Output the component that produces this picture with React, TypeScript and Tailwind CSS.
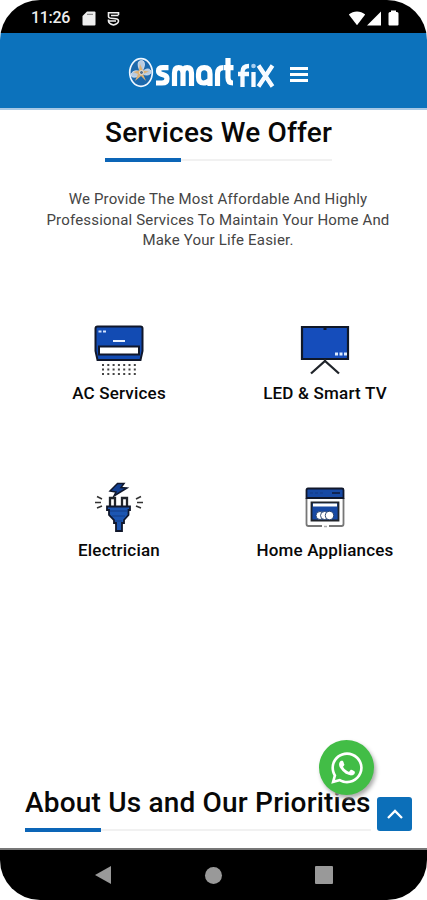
import React from 'react';
import { FaWhatsapp } from 'react-icons/fa';

function StatusBar() {
  return (
    <div className="flex h-[33px] shrink-0 items-center bg-black pl-[31px] pr-[28px] pt-[3px] text-[#eee]">
      <span className="w-[39px] whitespace-nowrap text-[16px] font-medium leading-5 tracking-[-0.3px]">11:26</span>
      <svg className="ml-[12px]" width="14" height="15" viewBox="0 0 14 15" fill="currentColor">
        <path d="M5 .5h7.5q1 0 1 1v12q0 1-1 1h-11q-1 0-1-1V5z" />
        <path d="M5 3.3h6" stroke="#777" strokeWidth="1" />
      </svg>
      <svg className="ml-[11px]" width="13" height="15" viewBox="0 0 13 15" fill="none" stroke="currentColor" strokeWidth="1.6">
        <path d="M11.500 4V1.800h-10v3.700q0 2 5 2t5 2.500c0 2-2 3.200-5 4-3-.8-5-2-5-4V8.500M4 4.500h7.500M1.500 10H9" />
      </svg>
      <div className="ml-auto flex items-center">
        <svg width="18" height="15" viewBox="0 0 18 15" fill="#fff"><path d="M.8 3.6C5.5-.5 12.500-.5 17.200 3.600L9 14.300z" /></svg>
        <svg className="ml-[1px]" width="14" height="15" viewBox="0 0 14 15" fill="#fff"><path d="M14 .5V14.500H0z" /></svg>
        <svg className="ml-[7px]" width="11" height="16" viewBox="0 0 11 16" fill="#fff"><path d="M3 .5h5v1.500h1q1.500 0 1.500 1.500v11q0 1-1 1h-8q-1 0-1-1v-11Q.5 2 2 2h1z" /></svg>
      </div>
    </div>
  );
}

function Logo() {
  return (
    <svg width="148" height="38" viewBox="0 0 148 38" aria-label="smart fix">
      <ellipse cx="14" cy="18.500" rx="11.300" ry="13.800" fill="#1b68ac" stroke="#eef6ff" strokeWidth="1.700" />
      <g fill="#b9cbe0" stroke="#f0f4fa" strokeWidth=".7">
        <path d="M12.500 16C10 10 11 6.500 14.500 6.500s4 5 1 10z" />
        <path d="M15 18c5-5 9-3 9 0s-5 4-8 2z" />
        <path d="M13 18c-4-3-9 0-9 3s6 3 9 0z" />
      </g>
      <path d="m13 10 3 6.500 6 1-6 2.500 3 7-5-5-6 5 3-7-5-2 6-1.500z" fill="#dcb176" />
      <circle cx="14.500" cy="18.500" r="2" fill="#5d7289" stroke="#fff" strokeWidth=".7" />
      <g fill="none" stroke="#fff" strokeWidth="5.200">
        <path d="M41.500 13.700H36q-4.500 0-4.500 3.300 0 2.300 3 3.200l2.500.8q3 1 3 3.700 0 4.300-5 4.300h-6" />
        <path d="M47.500 32V19q0-5.300 4.200-5.300T56 19v13M56 19q0-5.300 4.200-5.300T64.500 19v13" />
        <path d="M83 32V20q0-6.300-5.700-6.300T71.500 20v3q0 6 5 6 3 0 6.500-3" />
        <path d="M90.500 32V20q0-6.300 6-6.300" />
        <path d="M101 4v19.500q0 5.500 5 5.500M97 13.700h9.500" />
      </g>
      <g fill="none" stroke="#f7fbff" strokeWidth="4.300">
        <path d="M115.500 33V18q0-6 6.500-6M111 20h11M126.500 18v15M131.500 11.500l14 21M145.500 11.500l-14 21" />
      </g>
      <circle cx="126.500" cy="12" r="2.300" fill="#a8cef0" />
    </svg>
  );
}

function Header() {
  return (
    <header className="flex h-[77px] shrink-0 items-center border-b-2 border-[#a8c8e5] bg-[#0c72bc] pl-[127px] pt-[5px]">
      <Logo />
      <button aria-label="Menu" className="ml-[15px] mt-[3px] flex w-[18px] flex-col gap-[3px]">
        <span className="h-[3px] bg-white" />
        <span className="h-[3px] bg-white" />
        <span className="h-[3px] bg-white" />
      </button>
    </header>
  );
}

function Heading({ children }: { children: React.ReactNode }) {
  return (
    <div className="w-fit">
      <h2 className="whitespace-nowrap text-[28px] font-medium leading-8 tracking-[0.190px]">{children}</h2>
      <div className="mt-[9px] flex h-[4px] items-center bg-[linear-gradient(#fff_1px,#f1f1f1_1px,#f1f1f1_3px,#fff_3px)]">
        <div className="h-[4px] w-[76px] bg-[#0c65b7]" />
      </div>
    </div>
  );
}

function AcIcon() {
  return (
    <svg width="50" height="52" viewBox="0 0 50 52">
      <path d="M3.500 1.500h43q2 0 2 2V26l-2 9h-43l-2-9V3.500q0-2 2-2z" fill="#124bb3" stroke="#10172b" strokeWidth="2" />
      <path d="M5 21.500h40v8H5z" fill="#fff" stroke="#10172b" strokeWidth="2" />
      <path d="M4.500 6.500h3m1.500 0h3" stroke="#d4e4ff" strokeWidth="2" />
      <path d="M19 16h12" stroke="#e8f0ff" strokeWidth="2" />
      <path d="M8 40h36M8 44.500h36M8 49h36" stroke="#444" strokeWidth="2" strokeDasharray="2 3.300" />
    </svg>
  );
}

function TvIcon() {
  return (
    <svg width="50" height="52" viewBox="0 0 50 52">
      <path d="M2 2h46v32H2z" fill="#154dbb" stroke="#101827" strokeWidth="2.200" />
      <path d="M23.500 4h3" stroke="#10172b" strokeWidth="2" />
      <path d="M35 29h3m1.500 0h3m1.500 0h3" stroke="#dcecff" strokeWidth="3" />
      <path d="M25 34v3M11 48.500l14-12.500 14 12.500" fill="none" stroke="#20242a" strokeWidth="2.300" />
    </svg>
  );
}

function PlugIcon() {
  return (
    <svg width="50" height="50" viewBox="0 0 50 50">
      <path d="m23.500 1.500-7.500 7.500 6 1-2 4 13-8-6-.500 3-4z" fill="#123f91" stroke="#10172b" strokeWidth="1.500" />
      <path d="M16 25v-9h5v9m7 0v-9h5v9" fill="#fff" stroke="#20242a" strokeWidth="2.300" />
      <path d="M13 24.500h23v3.500h-1.500v5l-4.500 5v3h-2v8h-6v-8h-2v-3l-5-5v-5h-2z" fill="#1c56b2" stroke="#10172b" strokeWidth="1.800" />
      <path d="M16 29h17M18 34h13M21 39h7" stroke="#123d86" strokeWidth="1.200" />
      <path d="M3 14.500 8 17M1 20.500h6M3 26l5-2M42 17l5-2.500M43 20.500h6M42 24l5 2" fill="none" stroke="#333" strokeWidth="1.600" />
    </svg>
  );
}

function OvenIcon() {
  return (
    <svg width="40" height="42" viewBox="0 0 40 42">
      <path d="M1.500 11V37q0 2 2 2H17m7 0h12.500q2 0 2-2V11" fill="#fff" stroke="#777" strokeWidth="1.800" />
      <path d="M3 1.500h34q1.500 0 1.500 1.500v8h-37V3q0-1.500 1.500-1.500z" fill="#1749a4" stroke="#10172b" strokeWidth="1.800" />
      <path d="M27 6h8" stroke="#102453" strokeWidth="2" />
      <path d="M5 6h15" stroke="#153b83" strokeWidth="1" strokeDasharray="3 2" />
      <path d="M6.500 15.500h27v18h-27z" fill="#1749a4" stroke="#20242a" strokeWidth="1.800" />
      <path d="M8 18h24" stroke="#fff" strokeWidth="3" />
      <g fill="#fff" stroke="#213d69" strokeWidth=".9"><circle cx="15" cy="28.500" r="4" /><circle cx="19.500" cy="28.500" r="4" /><circle cx="24.500" cy="28.500" r="4.200" /></g>
      <path d="M19 39.500h3" stroke="#aaa" strokeWidth="1.500" />
    </svg>
  );
}

function Service({ icon, label }: { icon: React.ReactNode; label: string }) {
  return (
    <div className="flex flex-col items-center">
      <div className="flex h-[56px] items-start">{icon}</div>
      <h3 className="whitespace-nowrap text-[17px] font-medium leading-[24px] tracking-[0.200px]">{label}</h3>
    </div>
  );
}

export default function App() {
  return (
    <div className="relative flex h-[900px] w-[427px] flex-col overflow-hidden rounded-[40px] bg-white font-['Roboto','Liberation_Sans',sans-serif] text-[#080808]">
      <StatusBar />
      <Header />
      <main className="flex min-h-0 flex-1 flex-col">
        <div className="pl-[105px] pt-[7px]"><Heading>Services We Offer</Heading></div>
        <p className="mt-[27px] pl-[9px] text-center text-[15px] font-normal leading-[20.500px] tracking-[0.180px] text-[#454545]">
          We Provide The Most Affordable And Highly<br />Professional Services To Maintain Your Home And<br />Make Your Life Easier.
        </p>
        <div className="ml-[16px] mt-[74px] grid grid-cols-[206px_206px] gap-y-[77px]">
          <Service icon={<AcIcon />} label="AC Services" />
          <Service icon={<TvIcon />} label="LED & Smart TV" />
          <Service icon={<PlugIcon />} label="Electrician" />
          <Service icon={<div className="pt-[5px]"><OvenIcon /></div>} label="Home Appliances" />
        </div>
        <div className="mb-[16px] mt-auto pl-[25px]"><Heading>About Us and Our Priorities</Heading></div>
      </main>
      <nav className="flex h-[52px] shrink-0 items-center justify-between border-t-2 border-[#777] bg-black pl-[95px] pr-[94px] text-[#999]">
        <svg width="17" height="20" viewBox="0 0 17 20" fill="currentColor"><path d="M0 10 16 1v18z" /></svg>
        <span className="h-[17px] w-[17px] rounded-full bg-[#999]" />
        <span className="h-[18px] w-[18px] rounded-[1px] bg-[#999]" />
      </nav>
      <button aria-label="WhatsApp" className="absolute left-[319px] top-[740px] flex h-[55px] w-[55px] items-center justify-center rounded-full bg-[#42bd46] text-white shadow-[2px_3px_4px_#aaa]">
        <FaWhatsapp size={36} />
      </button>
      <button aria-label="Back to top" className="absolute left-[377px] top-[797px] flex h-[34px] w-[35px] items-center justify-center rounded-[3px] bg-[#0c6fb9]">
        <svg width="16" height="10" viewBox="0 0 16 10" fill="none" stroke="#fff" strokeWidth="2.300"><path d="m1 9 7-7 7 7" /></svg>
      </button>
    </div>
  );
}
